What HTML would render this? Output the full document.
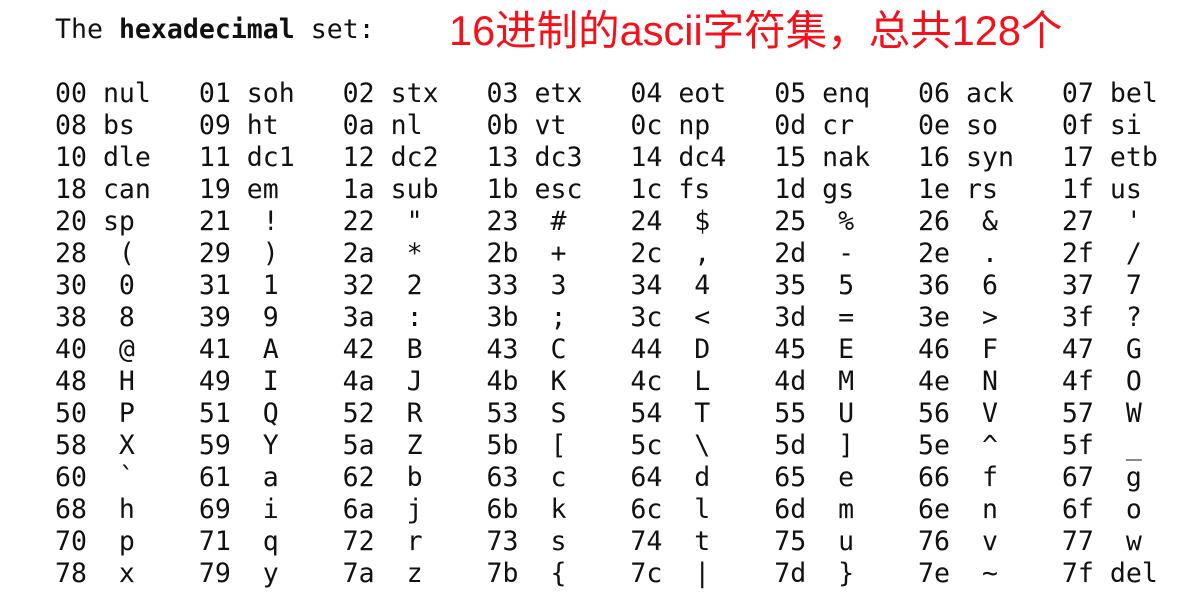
<!DOCTYPE html>
<html><head><meta charset="utf-8"><style>
html,body{margin:0;padding:0;background:#fff;width:1188px;height:606px;overflow:hidden}
pre{position:absolute;left:55px;margin:0;font-family:"DejaVu Sans Mono","Liberation Mono",monospace;font-size:26.55px;line-height:32px;color:#111}
#t{top:14px}
#r{position:absolute;left:449px;top:7px;font-family:"Liberation Sans","Noto Sans CJK SC",sans-serif;font-size:41.5px;line-height:48px;color:#f5101a;white-space:nowrap}
#g{top:78px}
</style></head><body>
<pre id="t">The <b>hexadecimal</b> set:</pre>
<div id="r">16进制的ascii字符集，总共128个</div>
<pre id="g">00 nul   01 soh   02 stx   03 etx   04 eot   05 enq   06 ack   07 bel
08 bs    09 ht    0a nl    0b vt    0c np    0d cr    0e so    0f si
10 dle   11 dc1   12 dc2   13 dc3   14 dc4   15 nak   16 syn   17 etb
18 can   19 em    1a sub   1b esc   1c fs    1d gs    1e rs    1f us
20 sp    21  !    22  "    23  #    24  $    25  %    26  &amp;    27  '
28  (    29  )    2a  *    2b  +    2c  ,    2d  -    2e  .    2f  /
30  0    31  1    32  2    33  3    34  4    35  5    36  6    37  7
38  8    39  9    3a  :    3b  ;    3c  &lt;    3d  =    3e  &gt;    3f  ?
40  @    41  A    42  B    43  C    44  D    45  E    46  F    47  G
48  H    49  I    4a  J    4b  K    4c  L    4d  M    4e  N    4f  O
50  P    51  Q    52  R    53  S    54  T    55  U    56  V    57  W
58  X    59  Y    5a  Z    5b  [    5c  \    5d  ]    5e  ^    5f  _
60  `    61  a    62  b    63  c    64  d    65  e    66  f    67  g
68  h    69  i    6a  j    6b  k    6c  l    6d  m    6e  n    6f  o
70  p    71  q    72  r    73  s    74  t    75  u    76  v    77  w
78  x    79  y    7a  z    7b  {    7c  |    7d  }    7e  ~    7f del</pre>
</body></html>
